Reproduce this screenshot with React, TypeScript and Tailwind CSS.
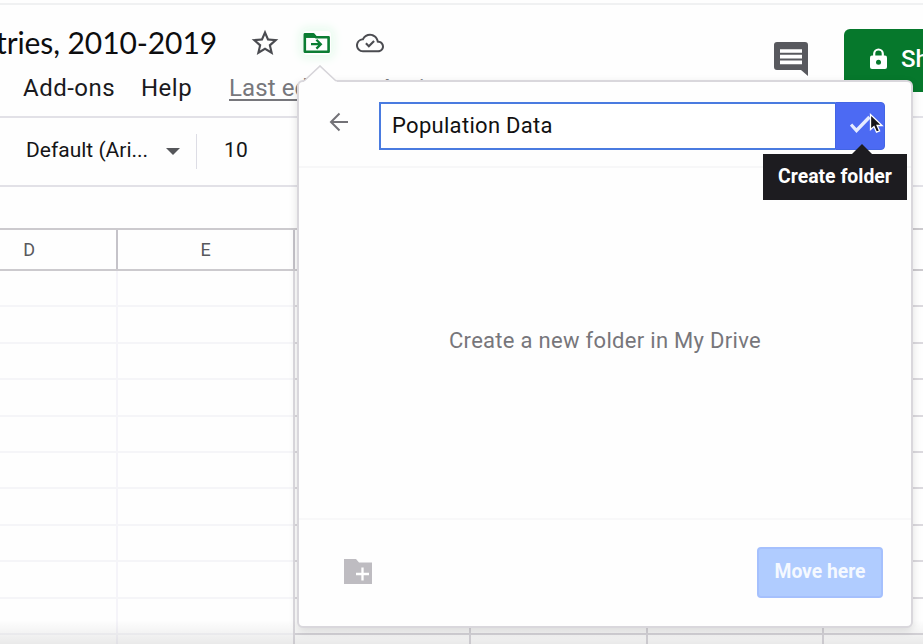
const columns = ["D", "E", "", "", "", ""];
const rows = Array.from({ length: 11 }, (_, i) => i);

function StarIcon() {
  return (
    <svg className="h-[32px] w-[32px] shrink-0" viewBox="0 0 24 24" fill="#4b4c51">
      <path d="M22 9.24l-7.19-.62L12 2 9.19 8.63 2 9.24l5.46 4.73L5.82 21 12 17.27 18.18 21l-1.63-7.03L22 9.24zM12 15.4l-3.76 2.27 1-4.28-3.32-2.88 4.38-.38L12 6.1l1.71 4.04 4.38.38-3.32 2.88 1 4.28L12 15.4z" />
    </svg>
  );
}

function MoveIcon() {
  return (
    <svg className="h-[24px] w-[28px] shrink-0 rounded-sm shadow-[0_0_10px_4px_#e9fbef]" viewBox="0 0 28 24" fill="none" stroke="#0b7d33">
      <path d="M1.8 20V3.2h8.400l2.600 3H25.600V20.800H1.800z" strokeWidth="2.600" strokeLinejoin="round" />
      <path d="M2 3h8.200l2.600 3.400H2z" fill="#0b7d33" />
      <path d="M8 13.200h9.500M13.400 8.800l4.400 4.400-4.400 4.400" strokeWidth="2.300" />
    </svg>
  );
}

function CloudIcon() {
  return (
    <svg className="h-[28px] w-[28px] shrink-0" viewBox="0 0 24 24" fill="#4b4c51">
      <path d="M19.35 10.04C18.67 6.59 15.64 4 12 4 9.11 4 6.6 5.64 5.35 8.04 2.34 8.36 0 10.91 0 14c0 3.31 2.69 6 6 6h13c2.76 0 5-2.24 5-5 0-2.64-2.05-4.78-4.65-4.96zM19 18.3H6c-2.4 0-4.3-1.9-4.3-4.3 0-2.2 1.64-4.04 3.83-4.26l.95-.1.44-.84C7.9 6.88 9.84 5.7 12 5.7c2.76 0 5.14 1.96 5.68 4.67l.25 1.26 1.31.1c1.82.12 3.06 1.54 3.06 3.27 0 1.8-1.5 3.3-3.3 3.3z" />
      <path d="M8.500 12.300l2.500 2.500 4.500-4.600" fill="none" stroke="#4b4c51" strokeWidth="1.800" />
    </svg>
  );
}

function CommentIcon() {
  return (
    <svg className="h-[36px] w-[36px]" viewBox="0 0 36 36">
      <path d="M4 1h28a3 3 0 0 1 3 3v31l-7-6H4a3 3 0 0 1-3-3V4a3 3 0 0 1 3-3z" fill="#58595e" />
      <path d="M7 10h22M7 15.700h22M7 21.300h22" stroke="#fff" strokeWidth="3.700" />
    </svg>
  );
}

function Header() {
  return (
    <div className="flex h-[118px] flex-col border-b-2 border-[#e2e1e7]">
      <div className="mt-[3px] h-[2px] shrink-0 bg-[#f0f1f2]" />
      <div className="flex h-full">
        <div className="flex w-[776px] shrink-0 flex-col">
          <div className="mt-[14px] flex h-[48px] items-center">
            <div className="mt-[-2px] flex w-[217px] shrink-0 justify-end overflow-hidden">
              <span className="shrink-0 whitespace-nowrap font-['Lato',sans-serif] text-[30px] leading-[44px] tracking-[-0.1px] text-[#0d0d0f]">countries, 2010-2019</span>
            </div>
            <div className="ml-[32px] flex items-center">
              <StarIcon />
              <div className="ml-[22px] flex"><MoveIcon /></div>
              <div className="ml-[25px] flex"><CloudIcon /></div>
            </div>
          </div>
          <div className="mt-px flex h-[40px] items-center whitespace-nowrap text-[24px] text-[#1a1a1d]">
            <span className="ml-[23px] w-[118px] shrink-0 tracking-[0.5px]">Add-ons</span>
            <span className="w-[88px] shrink-0 tracking-[0.5px]">Help</span>
            <span className="text-[24px] tracking-[0.1px] text-[#77777c] underline decoration-2 underline-offset-[3px]">Last edit was 4 minutes ago</span>
          </div>
        </div>
        <div className="ml-[-3px] mt-[36px] w-[71px] shrink-0"><CommentIcon /></div>
        <div className="mt-[24px] flex h-[63px] w-[140px] shrink-0 items-center rounded-md bg-[#06782c] pl-[26px] text-[24px] font-medium text-white">
          <svg className="mt-[-3px] h-[22px] w-[17px]" viewBox="0 0 17 22">
            <path d="M4.200 9V5.800a4.300 4.300 0 0 1 8.600 0V9" fill="none" stroke="#fff" strokeWidth="2.200" />
            <rect x="0" y="7.500" width="17" height="13.500" rx="2" fill="#fff" />
            <circle cx="8.500" cy="14.200" r="2.500" fill="#06782c" />
          </svg>
          <span className="ml-[14px] mt-[-4px]">Share</span>
        </div>
      </div>
    </div>
  );
}

function Toolbar() {
  return (
    <div className="flex h-[69px] items-center whitespace-nowrap border-b-2 border-[#e2e1e7] text-[22px] text-[#151517]">
      <span className="ml-[26px] mt-[-1px] w-[140px] text-[21px]">Default (Ari...</span>
      <span className="h-0 w-0 border-x-[7px] border-t-[7px] border-x-transparent border-t-[#55565a]" />
      <span className="ml-[16px] h-[35px] w-px bg-[#dddde5]" />
      <span className="ml-[27px] mt-[-1px] text-[21px] tracking-[0.3px]">10</span>
    </div>
  );
}

function Sheet() {
  return (
    <div className="ml-[-58px] w-[1100px] pt-[41px]">
      <div className="flex h-[43px] border-y-2 border-[#cccace]">
        {columns.map((name, i) => (
          <div key={i} className="flex w-[176.400px] shrink-0 items-center justify-center border-r-2 border-[#c5c3c9] text-[18px] text-[#58595d]">{name}</div>
        ))}
      </div>
      {rows.map((row) => (
        <div key={row} className="flex h-[36.400px]">
          <div className="flex w-[352.800px] shrink-0 border-b-2 border-[#f5f5f8]">
            <div className="w-[176.400px] border-r-2 border-[#f5f4f9]" />
            <div className="h-[36.400px] w-[176.400px] border-r-2 border-[#dddbe0]" />
          </div>
          {[0, 1, 2, 3].map((cell) => (
            <div key={cell} className="w-[176.400px] shrink-0 border-b-2 border-r-2 border-[#dbd9de]" />
          ))}
        </div>
      ))}
    </div>
  );
}

function MoveDialog() {
  return (
    <div className="absolute left-[297px] top-[80px] flex h-[548px] w-[616px] flex-col rounded-md border-2 border-[#d9d7dc] bg-[#fefefe] shadow-[0_3px_8px_rgba(0,0,0,0.12)]">
      <svg className="absolute left-[5px] top-[-17px] h-[18px] w-[34px]" viewBox="0 0 34 18">
        <path d="M0 18v-2L16 1l16 15 2 2z" fill="#fefefe" />
        <path d="M0 16L16 1l16 15" fill="none" stroke="#d6d4d9" strokeWidth="1.600" />
      </svg>
      <div className="flex h-[86px] shrink-0 border-b-2 border-[#f7f7f8]">
        <svg className="ml-[30px] mt-[30px] h-[20px] w-[20px]" viewBox="0 0 20 20" fill="none" stroke="#737277" strokeWidth="2">
          <path d="M19 10H2M10.500 1.500L2 10l8.500 8.500" />
        </svg>
        <div className="ml-[30px] mt-[20px] flex h-[48px] w-[506px]">
          <div className="flex flex-1 items-center border-2 border-r-0 border-[#4a7be0] bg-white pb-[2px] pl-[11px] text-[22px] tracking-[0.300px] text-[#111]">Population Data</div>
          <div className="relative flex w-[50px] items-center justify-center rounded-r-sm border border-[#4365e4] bg-[#4c6af3]">
            <svg className="mt-[-4px] h-[18px] w-[21px]" viewBox="0 0 21 18"><path d="M1 9.500l5.500 6L19.500 2" fill="none" stroke="#e6ecff" strokeWidth="3.300" /></svg>
            <svg className="absolute left-[33px] top-[10px] h-[21px] w-[15px]" viewBox="0 0 15 21"><path d="M1.500 1.500v15l3.500-3 2.500 5.700 3.100-1.300-2.500-5.400h5z" fill="#151419" stroke="#fff" strokeWidth="1.300" /></svg>
            <div className="absolute left-[-73px] top-[51px] flex h-[46px] w-[144px] items-center justify-center bg-[#1d1c20] text-[19.400px] font-bold text-white">
              <span className="whitespace-nowrap">Create folder</span>
              <span className="absolute left-[89px] top-[-10px] border-x-[10px] border-b-[10px] border-x-transparent border-b-[#1d1c20]" />
            </div>
          </div>
        </div>
      </div>
      <div className="flex h-[352px] shrink-0 items-center justify-center border-b-2 border-[#f8f8f9] text-[22px] text-[#77767b]">
        <span className="mt-[-5px] whitespace-nowrap tracking-[0.300px]">Create a new folder in My Drive</span>
      </div>
      <div className="flex flex-1 items-center justify-between pb-[2px] pl-[45px] pr-[28px]">
        <svg className="mt-[-1px] h-[25px] w-[28px]" viewBox="0 0 28 25">
          <path d="M0 0h12l3 3.500h13V25H0z" fill="#bebcc1" />
          <path d="M18.500 8.500v13M12 15h13" stroke="#fff" strokeWidth="2.300" />
        </svg>
        <button className="mt-px h-[51px] w-[126px] rounded border-2 border-[#a5c0fd] bg-[#b0ccff] text-[19.300px] font-bold text-[#f5f9ff]">Move here</button>
      </div>
    </div>
  );
}

export default function App() {
  return (
    <div className="relative h-[644px] w-[923px] overflow-hidden bg-[#fefefe] font-['Roboto',sans-serif]">
      <Header />
      <Toolbar />
      <Sheet />
      <div className="absolute bottom-0 left-0 h-[24px] w-full bg-linear-to-b from-transparent to-black/8" />
      <MoveDialog />
    </div>
  );
}
